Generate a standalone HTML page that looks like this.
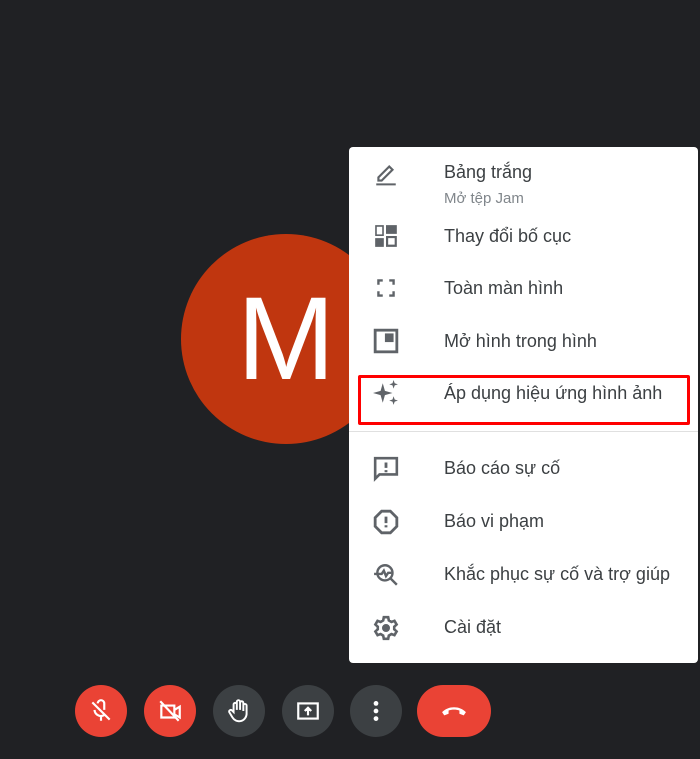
<!DOCTYPE html>
<html><head><meta charset="utf-8"><style>
body{margin:0;width:700px;height:759px;background:#202124;position:relative;overflow:hidden;font-family:"Liberation Sans",Roboto,sans-serif}
.av{position:absolute;left:181px;top:234px;width:210px;height:210px;border-radius:50%;background:#c0360f;color:#fff;font-size:118px;text-align:center;line-height:210px}
.menu{position:absolute;left:349px;top:147px;width:349px;height:516px;background:#fff;border-radius:4px}
.it{position:absolute;left:95px;font-size:18px;color:#3c4043;line-height:22px;white-space:nowrap}
.sub{position:absolute;left:95px;font-size:15px;color:#80868b;line-height:18px}
.ic{position:absolute;left:24px;width:26px;height:26px}
.hl{position:absolute;left:9px;top:228px;width:326px;height:44px;border:3px solid #f00;border-radius:2px}
.dv{position:absolute;left:0;right:0;top:284px;height:1px;background:#e0e0e0}
.b{position:absolute;top:685px;width:52px;height:52px;border-radius:26px;background:#3c4043}
.b svg{position:absolute;left:13px;top:13px}
.r{background:#ea4335}
</style></head><body>
<div class="av">M</div>
<div class="menu">
<svg class="ic" style="top:13px" viewBox="0 0 24 24" fill="none" stroke="#5f6368" stroke-width="2"><path d="M5 16 L15 6 L18 9 L8 19 H5 Z"/><path d="M3 22.5H21" stroke-width="1.8"/></svg>
<div class="it" style="top:14px">Bảng trắng</div><div class="sub" style="top:43px">Mở tệp Jam</div>
<svg class="ic" style="top:76px" viewBox="0 0 24 24" fill="#5f6368"><path d="M2 2h8v10H2z M2 14h8v8H2z M12 2h10v8H12z"/><path d="M13 13h8v8h-8z" fill="none" stroke="#5f6368" stroke-width="2"/><rect x="3.5" y="3.5" width="5" height="7" fill="#fff"/></svg>
<div class="it" style="top:78px">Thay đổi bố cục</div>
<svg class="ic" style="top:128px" viewBox="0 0 24 24" fill="none" stroke="#5f6368" stroke-width="2.2"><path d="M5 9V5h4M15 5h4v4M19 15v4h-4M9 19H5v-4"/></svg>
<div class="it" style="top:130px">Toàn màn hình</div>
<svg class="ic" style="top:181px" viewBox="0 0 24 24"><rect x="2" y="2" width="20" height="20" fill="none" stroke="#5f6368" stroke-width="2.6"/><rect x="11" y="5" width="8" height="8" fill="#5f6368"/></svg>
<div class="it" style="top:183px">Mở hình trong hình</div>
<svg class="ic" style="top:233px" viewBox="0 0 24 24" fill="#5f6368"><path d="M9 3 L11 10 L18 12 L11 14 L9 21 L7 14 L0 12 L7 10Z M19 0 L20 3 L23 4 L20 5 L19 8 L18 5 L15 4 L18 3Z M19 15 L20 18 L23 19 L20 20 L19 23 L18 20 L15 19 L18 18Z"/></svg>
<div class="it" style="top:235px">Áp dụng hiệu ứng hình ảnh</div>
<div class="hl"></div>
<div class="dv"></div>
<svg class="ic" style="top:309px" viewBox="0 0 24 24" fill="none" stroke="#5f6368" stroke-width="2.4"><path d="M2 2h20v15H6l-4 4z"/><path d="M12 6v5M12 13v2" stroke-width="2.6"/></svg>
<div class="it" style="top:310px">Báo cáo sự cố</div>
<svg class="ic" style="top:362px" viewBox="0 0 24 24" fill="none" stroke="#5f6368" stroke-width="2.6"><path d="M8 2h8l6 6v8l-6 6H8l-6-6V8z"/><path d="M12 7v6M12 15v2"/></svg>
<div class="it" style="top:363px">Báo vi phạm</div>
<svg class="ic" style="top:415px" viewBox="0 0 24 24" fill="none" stroke="#5f6368" stroke-width="2.2"><circle cx="11" cy="10" r="7"/><path d="M16 15l6 6"/><path d="M1 11h7l2-3 2 5 2-3h3"/></svg>
<div class="it" style="top:416px">Khắc phục sự cố và trợ giúp</div>
<svg class="ic" style="top:468px" viewBox="0 0 24 24" fill="none" stroke="#5f6368" stroke-width="2.4"><path d="M10 2h4l.6 3 2.4 1.4 2.8-1 2 3.4-2.2 2v2.4l2.2 2-2 3.4-2.8-1L14.6 19 14 22h-4l-.6-3L7 17.6l-2.8 1-2-3.4 2.2-2v-2.4l-2.2-2 2-3.4 2.8 1L9.4 5z"/><circle cx="12" cy="12" r="2.5" fill="#5f6368"/></svg>
<div class="it" style="top:469px">Cài đặt</div>
</div>
<div class="b r" style="left:75px"><svg width="26" height="26" viewBox="0 0 24 24" fill="none" stroke="#fff" stroke-width="2"><path d="M9 5a3 3 0 0 1 6 0v6"/><path d="M6 11a6 6 0 0 0 10 4M12 17v4M4 4l16 16"/></svg></div>
<div class="b r" style="left:144px"><svg width="26" height="26" viewBox="0 0 24 24" fill="none" stroke="#fff" stroke-width="2"><path d="M4 7h12v11H4z M16 11l5-3v10l-5-3"/><path d="M3 3l17 18"/></svg></div>
<div class="b" style="left:213px"><svg width="26" height="26" viewBox="0 0 24 24" fill="none" stroke="#fff" stroke-width="1.8"><path d="M7 13V6a1.5 1.5 0 0 1 3 0v5V3.5a1.5 1.5 0 0 1 3 0V11V4.5a1.5 1.5 0 0 1 3 0V12V7a1.5 1.5 0 0 1 3 0v8a7 7 0 0 1-13 3l-3-5a1.5 1.5 0 0 1 2.5-1.5z"/></svg></div>
<div class="b" style="left:282px"><svg width="26" height="26" viewBox="0 0 24 24" fill="none" stroke="#fff" stroke-width="2"><rect x="3" y="5" width="18" height="14"/><path d="M12 16v-6M9 12l3-3 3 3" fill="#fff"/></svg></div>
<div class="b" style="left:350px"><svg width="26" height="26" viewBox="0 0 24 24" fill="#fff"><circle cx="12" cy="5" r="2.2"/><circle cx="12" cy="12" r="2.2"/><circle cx="12" cy="19" r="2.2"/></svg></div>
<div class="b r" style="left:417px;width:74px"><svg style="left:24px" width="26" height="26" viewBox="0 0 24 24" fill="#fff"><path d="M1 13c6-6 16-6 22 0l-2 3-4-1.5v-3c-3-1-7-1-10 0v3L3 16z"/></svg></div>
</body></html>
